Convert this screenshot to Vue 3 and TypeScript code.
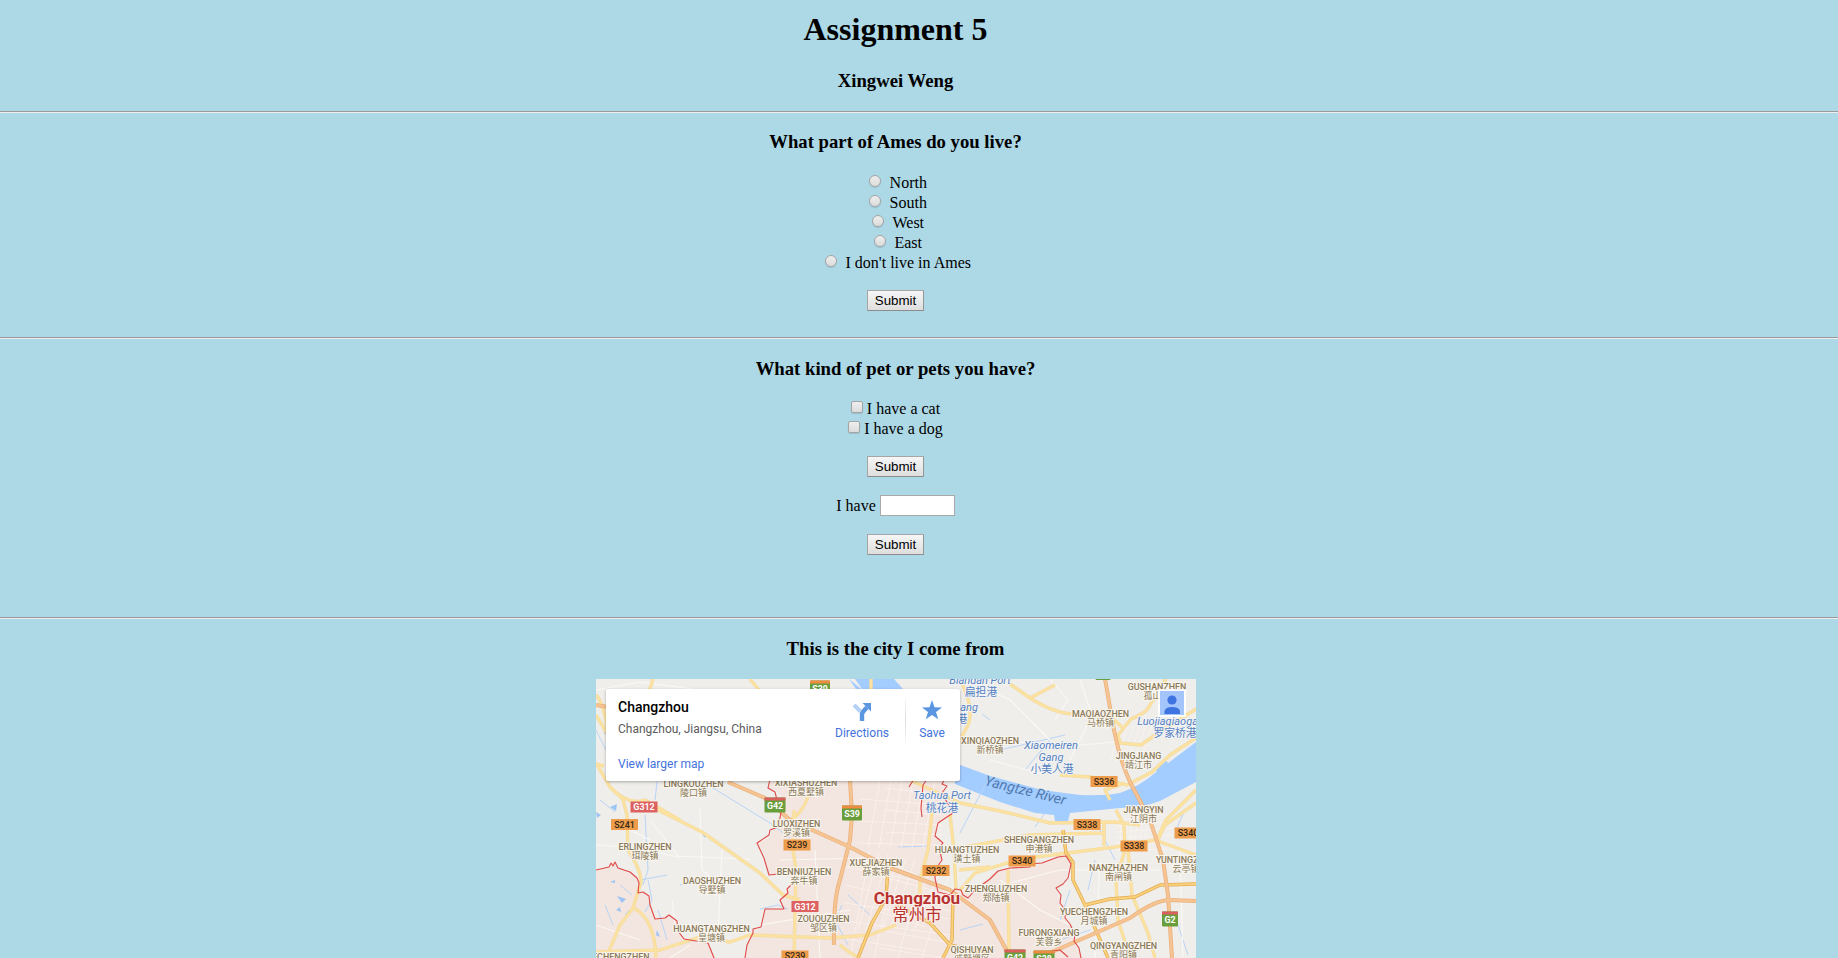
<script setup lang="ts">
interface Place { x: number; y: number; en: string; zh: string }
interface Shield { x: number; y: number; t: string; kind: 'province' | 'express' | 'national' }

const regions: string[] = ['North', 'South', 'West', 'East', "I don't live in Ames"]
const pets: string[] = ['I have a cat', 'I have a dog']

const places: Place[] = [
  { x: 693.5, y: 787, en: 'LINGKOUZHEN', zh: '陵口镇' },
  { x: 806, y: 786, en: 'XIXIASHUZHEN', zh: '西夏墅镇' },
  { x: 645, y: 850, en: 'ERLINGZHEN', zh: '珥陵镇' },
  { x: 712, y: 884, en: 'DAOSHUZHEN', zh: '导墅镇' },
  { x: 711.5, y: 932, en: 'HUANGTANGZHEN', zh: '皇塘镇' },
  { x: 615, y: 960, en: 'ZHECHENGZHEN', zh: '' },
  { x: 796.5, y: 826.5, en: 'LUOXIZHEN', zh: '罗溪镇' },
  { x: 804, y: 874.5, en: 'BENNIUZHEN', zh: '奔牛镇' },
  { x: 876, y: 865.5, en: 'XUEJIAZHEN', zh: '薛家镇' },
  { x: 823.5, y: 922, en: 'ZOUQUZHEN', zh: '邹区镇' },
  { x: 967, y: 852.5, en: 'HUANGTUZHEN', zh: '璜土镇' },
  { x: 996, y: 891.5, en: 'ZHENGLUZHEN', zh: '郑陆镇' },
  { x: 972, y: 952.5, en: 'QISHUYAN', zh: '戚墅堰区' },
  { x: 990, y: 743.5, en: 'XINQIAOZHEN', zh: '新桥镇' },
  { x: 1100.5, y: 716.5, en: 'MAQIAOZHEN', zh: '马桥镇' },
  { x: 1157, y: 689.5, en: 'GUSHANZHEN', zh: '孤山镇' },
  { x: 1138.5, y: 758.5, en: 'JINGJIANG', zh: '靖江市' },
  { x: 1143.5, y: 812.5, en: 'JIANGYIN', zh: '江阴市' },
  { x: 1039, y: 842.5, en: 'SHENGANGZHEN', zh: '申港镇' },
  { x: 1118.5, y: 870.5, en: 'NANZHAZHEN', zh: '南闸镇' },
  { x: 1186, y: 862.5, en: 'YUNTINGZHEN', zh: '云亭镇' },
  { x: 1094, y: 914.5, en: 'YUECHENGZHEN', zh: '月城镇' },
  { x: 1049, y: 935.5, en: 'FURONGXIANG', zh: '芙蓉乡' },
  { x: 1123.5, y: 948.5, en: 'QINGYANGZHEN', zh: '青阳镇' },
]

const shields: Shield[] = [
  { x: 820, y: 688, t: 'S39', kind: 'express' },
  { x: 1103, y: 672.5, t: '', kind: 'express' },
  { x: 644, y: 807, t: 'G312', kind: 'national' },
  { x: 775, y: 805, t: 'G42', kind: 'express' },
  { x: 852, y: 813, t: 'S39', kind: 'express' },
  { x: 624.5, y: 824.5, t: 'S241', kind: 'province' },
  { x: 797, y: 845, t: 'S239', kind: 'province' },
  { x: 936, y: 870.5, t: 'S232', kind: 'province' },
  { x: 805, y: 906.5, t: 'G312', kind: 'national' },
  { x: 795, y: 956, t: 'S239', kind: 'province' },
  { x: 1104, y: 781.5, t: 'S336', kind: 'province' },
  { x: 1087, y: 824.5, t: 'S338', kind: 'province' },
  { x: 1134, y: 846, t: 'S338', kind: 'province' },
  { x: 1188, y: 833, t: 'S340', kind: 'province' },
  { x: 1022, y: 861, t: 'S340', kind: 'province' },
  { x: 1170, y: 919, t: 'G2', kind: 'express' },
  { x: 1015, y: 957, t: 'G42', kind: 'express' },
  { x: 1044, y: 958, t: 'S38', kind: 'express' },
]

const shieldWidth = (s: Shield): number => (s.t.length === 4 ? 27 : s.t.length === 2 ? 16 : s.t === 'S39' ? 20 : s.t ? 21 : 15)

const yellowRoads: string[] = [
  'M653 679 L649 692 M750 679 L759 690 M596 695 Q605 705 608 735 L596 715 M871 679 V690',
  'M596 763 L610 787 Q622 798 623 800 L627 815 L628 850 Q641 870 641 882 L633 908 L620 925 L606 958',
  'M596 764 L604 766 M610 787 Q628 806 645 800 L680 820',
  'M658 810 L702 832 L760 873 L783 895 L800 900',
  'M634 908 Q655 920 656 958 M596 952 L660 950 L700 937 L730 942 L750 935 L830 938 L870 935 L896 925',
  'M812 782 Q806 812 790 820 M932 812 L928 850 L920 880 L920 900',
  'M950 815 L954 850 L956 890 M910 780 L960 803 L1000 811 L1050 823 L1115 822 L1140 825',
  'M1010 684 L1030 698 Q1055 714 1075 714 L1112 718 L1122 727 M1030 698 L1055 685',
  'M1166 679 L1150 705 Q1148 712 1131 719 L1118 735 L1120 743 L1141 745 L1155 735 L1196 709',
  'M1060 775 L1090 777 L1127 785 L1152 772 L1170 755 L1196 738 M1196 803 L1165 825 L1157 842',
  'M960 890 L975 873 L1020 859 L1115 847 L1155 840 M960 848 L1030 835 L1104 833 M1104 823 V846',
  'M1116 810 L1124 825 L1125 850 L1116 880 L1118 920 L1130 958',
  'M1128 848 L1132 895 L1148 933 L1155 958 M1008 870 L1009 950',
  'M1155 840 L1196 855 M1156 842 L1166 820 L1196 790 M959 870 L990 867',
  'M960 679 Q975 710 968 725 L960 740 M1110 800 L1105 790 L1125 783',
  'M794 810 L793 850 L796 870 L794 958 M840 945 Q852 955 860 958',
]
const orangeRoads: string[] = [
  'M728 782 L765 798 L790 820 L850 847 L890 868 L950 890 L990 920 L1008 953',
  'M850 780 L852 815 L850 840 L840 880 Q833 900 834 945',
  'M1105 679 L1114 730 Q1120 760 1130 782 L1150 820 L1163 860 L1168 895 L1172 958',
  'M1045 955 L1130 918 Q1155 900 1170 900 L1196 901',
  'M596 705 L608 707',
]
const goldRoads: string[] = [
  'M888 868 L886 898 L872 923 L858 958 M880 875 Q883 860 889 869',
  'M953 893 L952 940 L943 958 M898 905 L930 923 L950 945 L990 954',
  'M1063 830 L1066 853 L1073 862 L1073 880 L1085 905 L1098 935 L1108 958',
  'M1085 905 L1110 899 L1135 897 L1160 885 L1196 884',
]

// Local street grid, slightly skewed around the city centre.
const streets: string[] = []
for (let i = 0; i < 11; i++) {
  streets.push(`M${870 + i * 9} ${850 + i * 2} L${850 + i * 8} ${i % 3 ? 930 : 958}`)
  streets.push(`M${i % 2 ? 845 : 880} ${858 + i * 9} L${i % 3 ? 950 : 925} ${879 + i * 8}`)
}
for (let i = 0; i < 6; i++) {
  streets.push(`M${880 + i * 11} 780 L${868 + i * 11} 848`)
  streets.push(`M${i % 2 ? 858 : 885} ${788 + i * 11} L942 ${795 + i * 10}`)
  streets.push(`M${1122 + i * 5} ${820 + i} L${1119 + i * 5} 852`)
  streets.push(`M1115 ${820 + i * 6} L1175 ${814 + i * 7}`)
  streets.push(`M${1122 + i * 6} 725 L${1110 + i * 6} 762`)
}
</script>

<template>
  <div class="page">
    <h1>Assignment 5</h1>
    <h3 class="author">Xingwei Weng</h3>
    <hr />
    <section class="ames">
      <h3>What part of Ames do you live?</h3>
      <form @submit.prevent>
        <label v-for="r in regions" :key="r" class="row radio"><input type="radio" name="region" :value="r" /><span>{{ r }}</span></label>
        <button class="first">Submit</button>
      </form>
    </section>
    <hr />
    <section class="pets">
      <h3>What kind of pet or pets you have?</h3>
      <form @submit.prevent>
        <label v-for="p in pets" :key="p" class="row check"><input type="checkbox" /><span>{{ p }}</span></label>
        <button class="second">Submit</button>
        <label class="have"><span>I have</span><input type="text" /></label>
        <button>Submit</button>
      </form>
    </section>
    <hr />
    <section class="city">
      <h3>This is the city I come from</h3>
      <div class="map">
        <svg width="600" height="279" viewBox="596 679 600 279">
          <rect x="596" y="679" width="600" height="279" fill="#f0eeea" />
          <path class="land" d="M596 870 L609 867 L613 862 L618 868 L630 872 L637 878 L638 893 L648 893 L650 905 L655 919 L665 918 L669 915 L677 921 L681 935 L688 940 L708 943 L716 958 H596Z" />
          <path class="land" d="M745 958 L747 945 L755 930 L763 927 L765 909 L784 909 L780 900 L788 889 L797 880 L778 873 L769 874 L765 855 L758 843 L769 838 L778 817 L785 800 L776 790 L768 788 L770 779 H945 L942 790 L953 813 L938 823 L935 836 L943 845 L942 860 L935 870 L938 885 L948 893 L955 888 L970 895 L985 880 L996 872 L1010 868 L1035 867 L1043 862 L1058 857 L1066 857 L1071 864 L1065 880 L1056 888 L1060 905 L1065 918 L1075 935 L1079 948 L1082 958Z" />
          <g class="water">
            <path d="M855 679 H894 L913 700 H870Z M849 679 L858 692 H865Z" />
            <path d="M955 763 L990 776 L1042 790 L1080 795 Q1105 796 1120 793 Q1140 786 1155 773 L1196 742 V782 L1160 801 Q1145 807 1120 808 L1070 813 L1068 821 H1055 L1054 815 L1035 813 L1000 802 L955 784Z" />
            <path d="M1158 765 l5 -5 5 2 -4 9 -8 2Z" />
          </g>
          <path class="stream" d="M596 730 L606 750 M660 755 L655 800 M645 815 L648 870 L643 885 M700 780 L770 823 L790 838 M600 800 L615 812 M648 880 L652 900 L645 912 M620 885 L632 895 M605 905 L613 925 M658 910 L667 940 M667 875 L640 880 M715 880 L680 885 M842 905 L835 920 L848 945 M898 847 L930 846 M848 895 L870 915 M1000 750 L1065 735 M1025 770 L1050 740 M1045 813 L1035 827 M1070 890 L1060 920 M1095 860 L1088 890 M1115 860 L1100 830 M1185 810 L1176 830 M1177 922 L1188 955 M985 785 L960 833 M960 930 L983 924 M1060 940 L1090 930 M982 714 L990 720 M760 909 L778 905 L788 909" />
          <g class="ponds">
            <path d="M610 807 l7 -3 -1 7Z M596 812 l5 3 -4 3Z M702 834 l4 1 -1 3Z M617 896 l9 3 -4 4Z M610 882 l5 -2 0 3Z M625 915 l4 -5 1 5Z M657 930 l3 7 -4 -2Z M616 910 l4 -3 1 5Z M604 733 l2 -4 0 6Z" />
          </g>
          <path class="minor" d="M596 690 L640 682 L700 690 M596 845 L640 848 L672 856 L750 859 M700 808 L702 870 L720 885 M722 850 L718 935 M672 900 L675 925 M965 679 L1010 700 L1050 740 M975 740 L1080 745 L1118 742 M1050 679 L1068 700 L1055 720 M1080 679 L1092 715 L1070 760 M990 760 L1042 774 M990 888 L1060 870 L1160 870 M1100 860 L1095 958 M1180 850 L1183 958 M780 860 L870 858 M760 925 L850 910 M815 850 L820 958 M1000 880 L1040 910 L1070 925 M610 820 L650 840 M650 820 L680 858 M596 925 L640 940 M670 958 L690 945" />
          <path v-for="(d, i) in streets" :key="'s' + i" class="street" :d="d" />
          <g class="road yellow-casing"><path v-for="(d, i) in yellowRoads" :key="i" :d="d" /></g>
          <g class="road yellow"><path v-for="(d, i) in yellowRoads" :key="i" :d="d" /></g>
          <g class="road gold-casing"><path v-for="(d, i) in goldRoads" :key="i" :d="d" /></g>
          <g class="road gold"><path v-for="(d, i) in goldRoads" :key="i" :d="d" /></g>
          <g class="road orange-casing"><path v-for="(d, i) in orangeRoads" :key="i" :d="d" /></g>
          <g class="road orange"><path v-for="(d, i) in orangeRoads" :key="i" :d="d" /></g>
          <g class="border">
            <path d="M596 870 L609 867 L611 863 L613 866 L615 862 L618 868 L630 872 L637 878 L639 883 L638 893 L643 892 L649 896 L650 905 L655 919 L665 918 L669 915 L677 921 L678 931 L684 939 L708 943 L714 958" />
            <path d="M745 958 L747 945 L753 933 L753 929 L761 927 L765 909 L784 909 L780 900 L788 893 L787 889 L797 879 M778 874 L769 875 L764 858 L757 843 L769 835 L770 830 L778 827 L781 813 L777 800 L775 792 L768 788 L770 779" />
            <path d="M945 779 L942 784 L947 786 L942 793 L953 813 L938 823 L935 836 L943 843 L939 848 L942 860 L935 870 L935 878 L938 892 L950 895 L955 889 L961 890 L963 895 L968 898 L975 890 L990 879 L998 871 L1010 868 L1030 867 L1030 864 L1042 863 L1058 857 L1066 856 L1071 864 L1068 878 L1063 884 L1056 888 L1061 895 L1060 903 L1066 911 L1065 918 L1070 924 L1075 935 L1074 941 L1079 948 L1081 958 M927 779 L923 785 L921 808 L922 817 M914 779 L909 787 M1045 952 L1060 950 L1068 957" />
          </g>
          <g v-for="s in shields" :key="s.t + s.x" class="shield" :class="s.kind">
            <rect :x="s.x - shieldWidth(s) / 2" :y="s.y - (s.kind === 'express' ? 7.5 : 5.5)" :width="shieldWidth(s)" :height="s.kind === 'express' ? 15 : 11" :rx="s.kind === 'express' ? 1 : 0" />
            <rect v-if="s.kind === 'express'" :x="s.x - shieldWidth(s) / 2" :y="s.y - 7.5" :width="shieldWidth(s)" height="3" :fill="s.t[0] === 'G' ? '#d9605c' : '#ef8b43'" />
            <text v-if="s.t" :x="s.x" :y="s.y + (s.kind === 'express' ? 4 : 3)">{{ s.t }}</text>
          </g>
          <g v-for="p in places" :key="p.en" class="place">
            <text :x="p.x" :y="p.y">{{ p.en }}</text>
            <text v-if="p.zh" class="zh" :x="p.x" :y="p.y + 9">{{ p.zh }}</text>
          </g>
          <g class="port">
            <text x="980" y="683.5">Biandan Port</text><text class="zh" x="981" y="696">扁担港</text>
            <text x="958.5" y="710.5">Wugang</text><text class="zh" x="962" y="723">港</text>
            <text x="1051" y="748.5">Xiaomeiren</text><text x="1051" y="760.5">Gang</text><text class="zh" x="1052" y="773">小美人港</text>
            <text x="942" y="798.5">Taohua Port</text><text class="zh" x="942" y="812">桃花港</text>
            <text x="1173.5" y="724.5">Luojiaqiaogang</text><text class="zh" x="1175" y="737">罗家桥港</text>
            <text class="river" transform="translate(984 785) rotate(14)">Yangtze River</text>
          </g>
          <g class="capital"><text x="917" y="903.5">Changzhou</text><text class="zh" x="917" y="921">常州市</text></g>
          <g class="avatar">
            <rect x="1158" y="689" width="28" height="28" fill="#fff" fill-opacity=".85" />
            <rect x="1160" y="691" width="24" height="24" fill="#a4c5fb" />
            <circle cx="1172" cy="700" r="4.6" fill="#3f73df" /><path d="M1164.5 714 v-3 q1 -4 7.5 -4 q7 0 8 4 v3Z" fill="#3f73df" />
          </g>
        </svg>
        <div class="card">
          <div class="info">
            <div class="name">Changzhou</div>
            <div class="addr">Changzhou, Jiangsu, China</div>
            <a>View larger map</a>
          </div>
          <div class="action directions">
            <svg width="18" height="18" viewBox="0 0 18 18"><path d="M1 2 L7.5 8.5" stroke="#b5d1f5" stroke-width="4" /><path d="M9 18 V11.5 Q9 9 14 4.5" fill="none" stroke="#5b96e2" stroke-width="4.4" /><path d="M9.5 0 H18 V8.5Z" fill="#5b96e2" /></svg>
            <span>Directions</span>
          </div>
          <i class="divider"></i>
          <div class="action save">
            <svg width="20" height="20" viewBox="0 0 20 20"><path fill="#5b96e2" d="M10 0 L12.5 7.2 L20 7.4 L14 12 L16.2 19.3 L10 15 L3.8 19.3 L6 12 L0 7.4 L7.5 7.2Z" /></svg>
            <span>Save</span>
          </div>
        </div>
      </div>
    </section>
  </div>
</template>

<style>
html, body { margin: 0; background: #add8e6; overflow: hidden; }
</style>

<style scoped>
.page { height: 958px; overflow: hidden; box-sizing: border-box; padding-top: 11px; background: #add8e6; font: 16px/20px "Liberation Serif", "Times New Roman", serif; color: #000; }
h1, h3, section { width: 1791px; text-align: center; }
h1 { margin: 0; font-size: 32px; line-height: 37px; }
h3 { margin: 0; font-size: 18.72px; line-height: 21px; }
.author { margin: 22px 0 20px; }
hr { height: 0; margin: 0; border: 0; border-top: 1px solid #9a9a9a; border-bottom: 1px solid #eee; }
form { display: flex; flex-direction: column; align-items: center; }
section { box-sizing: border-box; padding-top: 19px; }
.ames { height: 224px; padding-top: 18px; }
.pets { height: 278px; }
.row { display: flex; height: 20px; }
.row span { line-height: 22px; }
.radio:first-child { margin-top: 20px; }
.check:first-child { margin-top: 19px; }
.row input { appearance: none; box-sizing: border-box; width: 12px; height: 12px; border: 1px solid #a5a5a5; background: linear-gradient(#eee, #dcdcdc); box-shadow: 0 1px 1px rgba(0, 0, 0, .12); }
.radio input { margin: 3px 8.5px 0 5px; border-radius: 50%; }
.check input { margin: 3px 4px 0 0; border-radius: 2px; }
button { box-sizing: border-box; width: 57px; height: 21px; padding: 0; border: 1px solid #999; border-color: #a6a6a6 #959595 #8d8d8d #a6a6a6; border-radius: 1px; background: linear-gradient(#f6f6f6, #dedede); font: 13.33px/17px "Liberation Sans", Arial, sans-serif; color: #000; }
.first { margin-top: 18px; }
.second { margin-top: 18px; }
.have { display: flex; gap: 4px; height: 21px; margin: 18px 0; }
.have span { line-height: 21px; }
.have input { box-sizing: border-box; width: 75px; height: 21px; padding: 0; border: 1px solid #a9a9a9; background: #fff; }
.map { position: relative; width: 600px; height: 279px; margin: 20px 0 0 596px; overflow: hidden; text-align: left; font-family: Roboto, "Noto Sans CJK SC", sans-serif; }
.map > svg { display: block; }
.land { fill: #f3e5df; }
.water { fill: #a3ccff; }
.ponds { fill: #9cc4f5; }
.stream, .minor, .street, .border, .road { fill: none; stroke-linejoin: round; }
.stream { stroke: #b8d4f8; stroke-width: 1; }
.minor { stroke: #faf8f5; stroke-width: 1.1; }
.street { stroke: #fbf3ef; stroke-width: .8; }
.yellow-casing { stroke: #f2d9a0; stroke-width: 3.4; }
.yellow { stroke: #fbe2a0; stroke-width: 2.4; }
.gold-casing { stroke: #e3aa50; stroke-width: 3.4; }
.gold { stroke: #fbd27c; stroke-width: 1.9; }
.orange-casing { stroke: #e8b07a; stroke-width: 4; }
.orange { stroke: #f6c492; stroke-width: 2.6; }
.border { stroke: #df4848; stroke-width: 1.1; }
text { text-anchor: middle; }
.place text { font-size: 8.9px; font-weight: 500; fill: #8a7958; stroke: #f8f5ef; stroke-width: 2px; paint-order: stroke; }
.place .zh { font-size: 9px; font-weight: 400; }
.shield text { font-size: 8.9px; font-weight: 500; fill: #342718; }
.province rect { fill: #ec9c4a; }
.national rect { fill: #dc6160; }
.express rect:first-child { fill: #699e3d; }
.express text, .national text { fill: #fff; font-weight: 700; }
.port text { font-size: 11px; font-style: italic; fill: #5580c0; stroke: #f3f5f7; stroke-width: 1.5px; paint-order: stroke; }
.port .zh { font-size: 10.8px; font-style: normal; }
.port .river { text-anchor: start; font-size: 14.2px; stroke: none; fill: #5079ae; }
.capital text { font-size: 17px; font-weight: 700; fill: #b8322f; stroke: #fbefea; stroke-width: 2px; paint-order: stroke; }
.capital .zh { font-size: 16.5px; font-weight: 400; }
.card { position: absolute; top: 10px; left: 10px; box-sizing: border-box; display: flex; width: 354px; height: 92px; padding: 0 15px 0 12px; border-radius: 2px; background: #fff; box-shadow: 0 1px 3px rgba(0, 0, 0, .3); font-size: 12px; line-height: 16px; }
.info { width: 217px; }
.name { margin-top: 10px; font-size: 14px; font-weight: 500; line-height: 17px; }
.addr { margin-top: 5px; color: #5b5b5b; }
a { display: block; margin-top: 19px; color: #4272db; }
.action { display: flex; flex-direction: column; align-items: center; color: #4272db; }
.directions { width: 54px; padding-top: 14px; }
.directions span { margin-top: 4px; }
.save { width: 26px; padding-top: 11px; }
.save span { margin-top: 5px; }
.divider { width: 1px; height: 43px; margin: 10px 13px 0 16px; background: linear-gradient(#f6f6f6, #ddd, #f6f6f6); }
</style>
